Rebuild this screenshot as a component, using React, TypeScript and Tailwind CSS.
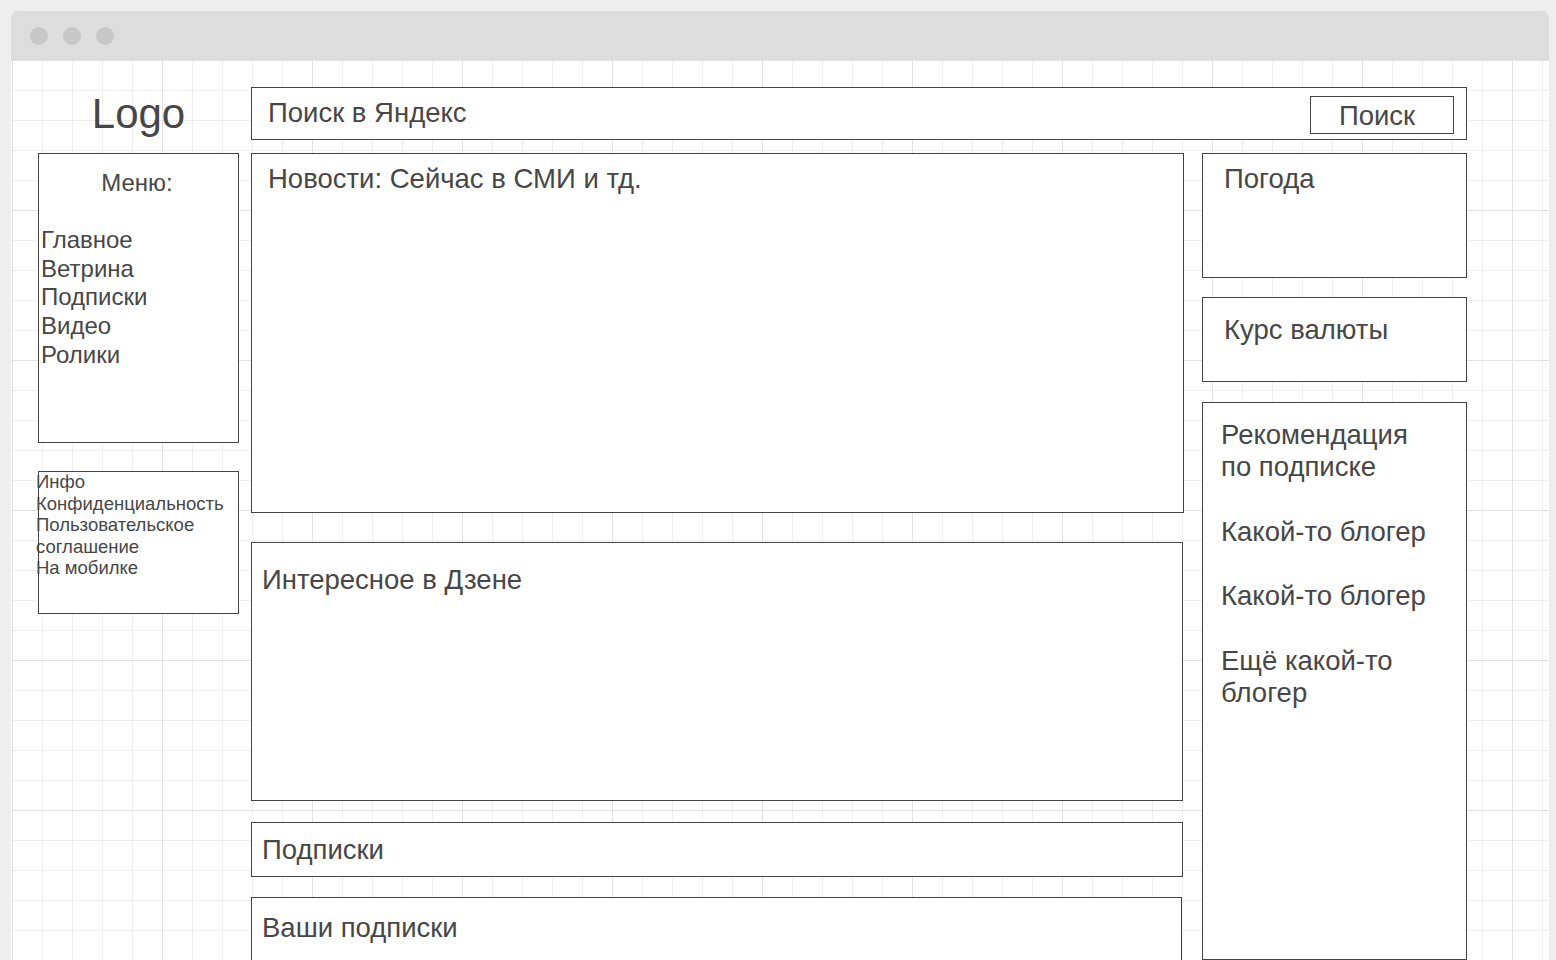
export default function App() {
  return (
    <div className="h-[960px] w-[1556px] overflow-hidden bg-[#eeeeee] pl-[11px] pr-[7px] pt-[11px] font-['Liberation_Sans',Arial,Helvetica,sans-serif] text-[#474747]">
      <div className="flex h-[949px] flex-col overflow-hidden rounded-t-[7px]">
        <div className="flex h-[49px] shrink-0 items-center gap-[15px] bg-[#dddddd] pl-[19px]">
          <span className="h-[18px] w-[18px] rounded-full bg-[#c8c8c8]" />
          <span className="h-[18px] w-[18px] rounded-full bg-[#c8c8c8]" />
          <span className="h-[18px] w-[18px] rounded-full bg-[#c8c8c8]" />
        </div>
        <div className="flex-1 bg-white bg-[linear-gradient(to_right,#e3e3e3_1px,transparent_1px),linear-gradient(to_bottom,#e3e3e3_1px,transparent_1px),linear-gradient(to_right,#efefef_1px,transparent_1px),linear-gradient(to_bottom,#efefef_1px,transparent_1px)] bg-[size:150px_150px,150px_150px,30px_30px,30px_30px] bg-[position:1px_0] pl-[27px] pt-[27px]">
          {/* Header row */}
          <div className="flex h-[53px] items-stretch">
            <div className="flex w-[201px] items-center justify-center text-[42px] leading-none">Logo</div>
            <div className="ml-[12px] flex w-[1216px] items-start justify-between border border-[#444444] bg-white">
              <div className="pl-[16px] pt-[10px] text-[27.5px] leading-[30px]">Поиск в Яндекс</div>
              <div className="mr-[12px] mt-[8px] flex h-[38px] w-[144px] items-center justify-center border border-[#444444] pr-[10px] pt-[1px] text-[27.5px] leading-none">
                Поиск
              </div>
            </div>
          </div>

          {/* Main row */}
          <div className="mt-[13px] flex items-start">
            {/* Left column */}
            <div className="flex w-[201px] flex-col">
              <div className="h-[290px] border border-[#444444] bg-white pt-[15px] text-[24px] leading-[28.8px]">
                <div className="pr-[3px] text-center">Меню:</div>
                <div className="h-[28px]" />
                <div className="pl-[2px]">
                  <div>Главное</div>
                  <div>Ветрина</div>
                  <div>Подписки</div>
                  <div>Видео</div>
                  <div>Ролики</div>
                </div>
              </div>
              <div className="mt-[28px] h-[143px] border border-[#444444] bg-white">
                <div className="-ml-[3px] -mt-[1px] text-[18.5px] leading-[21.5px]">
                  <div>Инфо</div>
                  <div>Конфиденциальность</div>
                  <div>Пользовательское</div>
                  <div>соглашение</div>
                  <div>На мобилке</div>
                </div>
              </div>
            </div>

            {/* Middle column */}
            <div className="ml-[12px] flex w-[933px] flex-col">
              <div className="h-[360px] border border-[#444444] bg-white pl-[16px] pt-[10px] text-[27.5px] leading-[30px]">
                Новости: Сейчас в СМИ и тд.
              </div>
              <div className="mt-[29px] h-[259px] w-[932px] border border-[#444444] bg-white pl-[10px] pt-[22px] text-[27.5px] leading-[30px]">
                Интересное в Дзене
              </div>
              <div className="mt-[21px] h-[55px] w-[932px] border border-[#444444] bg-white pl-[10px] pt-[12px] text-[27.5px] leading-[30px]">
                Подписки
              </div>
              <div className="mt-[20px] h-[100px] w-[931px] border border-[#444444] bg-white pl-[10px] pt-[15px] text-[27.5px] leading-[30px]">
                Ваши подписки
              </div>
            </div>

            {/* Right column */}
            <div className="ml-[18px] flex w-[265px] flex-col">
              <div className="h-[125px] border border-[#444444] bg-white pl-[21px] pt-[10px] text-[27.5px] leading-[30px]">
                Погода
              </div>
              <div className="mt-[19px] h-[85px] border border-[#444444] bg-white pl-[21px] pt-[17px] text-[27.5px] leading-[30px]">
                Курс валюты
              </div>
              <div className="mt-[20px] h-[558px] border border-[#444444] bg-white pl-[18px] pt-[16px] text-[27.5px] leading-[32.3px]">
                <div>Рекомендация</div>
                <div>по подписке</div>
                <div className="h-[32.3px]" />
                <div>Какой-то блогер</div>
                <div className="h-[32.3px]" />
                <div>Какой-то блогер</div>
                <div className="h-[32.3px]" />
                <div>Ещё какой-то</div>
                <div>блогер</div>
              </div>
            </div>
          </div>
        </div>
      </div>
    </div>
  );
}
